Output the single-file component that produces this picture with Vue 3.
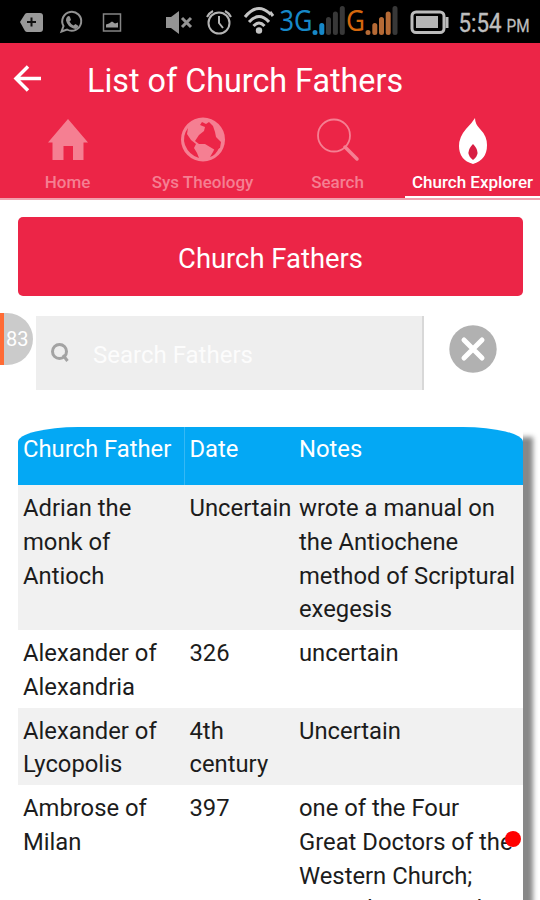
<script setup>
import { ref } from 'vue';

const activeTab = ref('explorer');
const searchText = ref('');

const tabs = [
  { id: 'home', label: 'Home' },
  { id: 'theology', label: 'Sys Theology' },
  { id: 'search', label: 'Search' },
  { id: 'explorer', label: 'Church Explorer' }
];

const fathers = [
  { name: 'Adrian the\nmonk of\nAntioch', date: 'Uncertain', notes: 'wrote a manual on\nthe Antiochene\nmethod of Scriptural\nexegesis' },
  { name: 'Alexander of\nAlexandria', date: '326', notes: 'uncertain' },
  { name: 'Alexander of\nLycopolis', date: '4th\ncentury', notes: 'Uncertain' },
  { name: 'Ambrose of\nMilan', date: '397', notes: 'one of the Four\nGreat Doctors of the\nWestern Church;\nstrongly opposed' }
];

// Clears the search field
function clearSearch() {
  searchText.value = '';
}
</script>

<template>
  <div class="screen">
    <div class="status-bar">
      <svg width="270" height="43" viewBox="0 0 270 43">
        <path d="M20 22l5-8q1-1 2-1h13q3 0 3 3v13q0 3-3 3H27q-1 0-2-1z" fill="#999" />
        <path d="M27 22h9M31.500 17.500v9" stroke="#111" stroke-width="2" />
        <path d="M61.500 31.500l2-5.500a9.500 9.500 0 1 1 3.500 3.500z" fill="none" stroke="#929292" stroke-width="2" />
        <path d="M67 17q2-2 3 0l1 3-1.500 1.500q1.500 3 4 4l2-1.500 3 2q-1 4-5 2.500-6-2-7.500-8-.2-2 1-3.500z" fill="#929292" />
        <rect x="103.500" y="14" width="17" height="17" fill="none" stroke="#858585" stroke-width="1.500" />
        <path d="M106 27.500v-3l3-1 3-2 3 2 3-1v5z" fill="#999" />
        <path d="M166 17h5l8-6v23l-8-6h-5z" fill="#949494" />
        <path d="M182 18l9 9M191 18l-9 9" stroke="#949494" stroke-width="3" />
        <circle cx="219" cy="23" r="10.500" fill="none" stroke="#b5b5b5" stroke-width="2" />
        <path d="M219 16v7l4 5M207 17q2-4 6-6M225 11q4 2 6 6" fill="none" stroke="#b5b5b5" stroke-width="2" />
        <path d="M245 17q14-17 28 0M249 22q10-11 20 0M253.500 26q5.500-6 11 0" fill="none" stroke="#c4c4c4" stroke-width="3" />
        <circle cx="259" cy="30.500" r="3.200" fill="#c4c4c4" />
      </svg>
      <svg width="270" height="43" viewBox="0 0 270 43">
        <path d="M0 12l3 4" stroke="#c4c4c4" stroke-width="3" />
        <text x="9.500" y="31" class="net-type" textLength="33" lengthAdjust="spacingAndGlyphs" fill="#1688c8">3G</text>
        <text x="76" y="31" class="net-type" textLength="19" lengthAdjust="spacingAndGlyphs" fill="#d5670d">G</text>
        <g stroke-width="5" stroke-linecap="round">
          <path d="M45 32.500v.1M51.800 25.500v7" stroke="#1688c8" />
          <path d="M58.500 19.500v13M65.400 14v18.500M72.300 8.500v24M125 8.500v24" stroke="#383838" />
          <path d="M98 32.500v.1M104.800 25.500v7M111.500 19.500v13M118.200 14v18.500" stroke="#b66a35" />
        </g>
        <rect x="142" y="12" width="32" height="20.500" rx="4" fill="none" stroke="#bcbcbc" stroke-width="3" />
        <rect x="146" y="16" width="22" height="12" fill="#b5b5b5" />
        <path d="M175.500 17h3v11h-3z" fill="#bcbcbc" />
        <text x="188.500" y="32" class="clock" textLength="43" lengthAdjust="spacingAndGlyphs">5:54</text>
        <text x="236.500" y="32" class="meridiem" textLength="23" lengthAdjust="spacingAndGlyphs">PM</text>
      </svg>
    </div>

    <header class="app-header">
      <div class="title-bar">
        <svg width="30" height="30" viewBox="0 0 30 30" fill="none" stroke="#fff" stroke-width="3.500">
          <path d="M28 14.500H4M15 2.500l-12 12 12 12" />
        </svg>
        <h1>List of Church Fathers</h1>
      </div>

      <nav class="tabs">
        <div
          class="tab"
          :class="{ 'active-tab': activeTab === tab.id }"
          v-for="tab in tabs"
          :key="tab.id"
          @click="activeTab = tab.id"
        >
          <svg v-if="tab.id === 'home'" width="48" height="48" viewBox="0 0 48 48">
            <path d="M24 2l20 23.500h-4.500v17.500H29V29h-9.500v14H8.500V25.500H4z" fill="currentColor" />
          </svg>
          <svg v-else-if="tab.id === 'theology'" width="48" height="48" viewBox="0 0 48 48">
            <circle cx="24" cy="22.500" r="22" fill="currentColor" />
            <path d="M9 11q-6 8-3 17 4 10 14 13l-2-5-3-5 2-4-5-4-4-6z" fill="#ec2547" />
            <path d="M23 5l4 2 3-2 4 4 2 6 1 5 5 5-1 6-5 2-5-3-5-3-6 0-4-3 4-6 5-4 1-4-5-2z" fill="#ec2547" />
            <path d="M36 31l4 0q-3 7-9 9l3-5z" fill="#ec2547" />
          </svg>
          <svg v-else-if="tab.id === 'search'" width="48" height="48" viewBox="0 0 48 48" fill="none" stroke="currentColor">
            <circle cx="20" cy="18.500" r="16" stroke-width="1.800" />
            <path d="M31 30l12 12" stroke-width="3.500" stroke-linecap="round" />
          </svg>
          <svg v-else width="48" height="48" viewBox="0 0 48 48">
            <path d="M26 1q0 6 5 11 7 7 7 16 0 15-14 19-14-4-14-18 0-9 7-17 6-6 9-11z" fill="currentColor" />
            <path d="M24 27q9 9 0 16-9-7 0-16z" fill="#d81f43" />
          </svg>
          <span>{{ tab.label }}</span>
        </div>
      </nav>
    </header>

    <main class="content">
      <button class="fathers-button">Church Fathers</button>

      <div class="search-row">
        <div class="search-box">
          <svg width="20" height="22" viewBox="0 0 20 22" fill="none" stroke="#a3a3a3">
            <circle cx="9.500" cy="9.500" r="7" stroke-width="3" />
            <path d="M13 13l4.500 6" stroke-width="3" />
          </svg>
          <input v-model="searchText" type="text" placeholder="Search Fathers">
        </div>
        <svg class="clear-icon" width="48" height="48" viewBox="0 0 48 48" @click="clearSearch">
          <circle cx="24" cy="24" r="23.700" fill="#b1b1b1" />
          <path d="M15 15l18 18M33 15l-18 18" stroke="#fff" stroke-width="5" stroke-linecap="round" />
        </svg>
      </div>

      <div class="fathers-table">
        <div class="table-row table-head">
          <div>Church Father</div>
          <div>Date</div>
          <div>Notes</div>
        </div>
        <div class="table-row" v-for="father in fathers" :key="father.name">
          <div>{{ father.name }}</div>
          <div>{{ father.date }}</div>
          <div>{{ father.notes }}</div>
        </div>
      </div>
    </main>

    <!-- Floating overlays -->
    <div class="side-badge">83</div>
    <div class="touch-dot"></div>
  </div>
</template>

<style>
body {
  margin: 0;
}
</style>

<style scoped>
.screen {
  position: relative;
  width: 540px;
  height: 900px;
  overflow: hidden;
  background: #fff;
  font-family: Roboto, "Liberation Sans", sans-serif;
}

.screen svg {
  flex: none;
}

.status-bar {
  display: flex;
  height: 43px;
  background: #000;
}

.net-type {
  font-family: "Noto Sans", sans-serif;
  font-size: 29px;
}

.clock {
  font-size: 26px;
  fill: #bebebe;
  stroke: #bebebe;
  stroke-width: 0.4px;
}

.meridiem {
  font-size: 18.5px;
  fill: #bebebe;
  stroke: #bebebe;
  stroke-width: 0.3px;
}

.app-header {
  display: flex;
  flex-direction: column;
  height: 155px;
  background: #ec2547;
  border-bottom: 2px solid #f1a0ad;
}

.title-bar {
  display: flex;
  align-items: center;
  gap: 44px;
  height: 74px;
  padding-left: 13px;
}

h1 {
  margin: 4px 0 0;
  color: #fff;
  font-size: 32.3px;
  font-weight: 400;
  white-space: nowrap;
}

.tabs {
  display: flex;
  height: 83px;
}

.tab {
  display: flex;
  flex-direction: column;
  align-items: center;
  box-sizing: border-box;
  width: 135px;
  height: 83px;
  padding-top: 2px;
  color: #f57f92;
  font-size: 17px;
  font-weight: 500;
  white-space: nowrap;
  border-bottom: 2px solid transparent;
}

.tab span {
  line-height: 20px;
  margin-top: 7px;
}

.active-tab {
  color: #fff;
  border-bottom-color: #fff;
}

.content {
  padding: 17px 17px 0 18px;
}

.fathers-button {
  display: block;
  width: 505px;
  height: 79px;
  padding: 4px 0 0;
  border: none;
  border-radius: 5px;
  background: #ec2547;
  color: #fff;
  font-family: inherit;
  font-size: 27.4px;
}

.search-row {
  display: flex;
  align-items: center;
  gap: 25px;
  margin: 20px 0 37px 18px;
}

.search-box {
  display: flex;
  align-items: center;
  box-sizing: border-box;
  width: 388px;
  height: 74px;
  padding-left: 14px;
  background: #eee;
  border-right: 2px solid #d8d8d8;
}

.search-box input {
  width: 300px;
  margin: 4px 0 0 23px;
  padding: 0;
  border: none;
  outline: none;
  background: transparent;
  font-family: inherit;
  font-size: 24px;
}

.search-box input::placeholder {
  color: #fcfcfc;
}

.clear-icon {
  margin-top: -8px;
}

.fathers-table {
  width: 505px;
  box-shadow: 10px 10px 5px #888;
}

.table-row {
  display: grid;
  grid-template-columns: 166.5px 109.5px 1fr;
  padding: 7px 0 3px;
  background: #fff;
  color: #1c1c1c;
  font-size: 23.8px;
  line-height: 33.75px;
  white-space: pre;
}

.table-row > div {
  padding-left: 5px;
}

.table-row:nth-child(even) {
  background: #f1f1f1;
}

.table-row.table-head {
  height: 58px;
  padding: 0;
  border-radius: 60px 60px 0 0 / 15px 15px 0 0;
  background: #04a8f4;
  color: #fff;
}

.table-head > div {
  padding-top: 6px;
}

.table-head > div:first-child {
  border-right: 1px solid #35b8f5;
}

.side-badge {
  position: absolute;
  top: 313px;
  left: 0;
  box-sizing: border-box;
  width: 33px;
  height: 52px;
  padding-left: 2px;
  border-left: 4px solid #ff6b35;
  border-radius: 0 26px 26px 0;
  background: #cbcbcb;
  color: #fff;
  font-size: 20px;
  line-height: 52px;
}

.touch-dot {
  position: absolute;
  top: 831px;
  left: 505px;
  width: 16px;
  height: 16px;
  border-radius: 50%;
  background: #f00;
}
</style>
